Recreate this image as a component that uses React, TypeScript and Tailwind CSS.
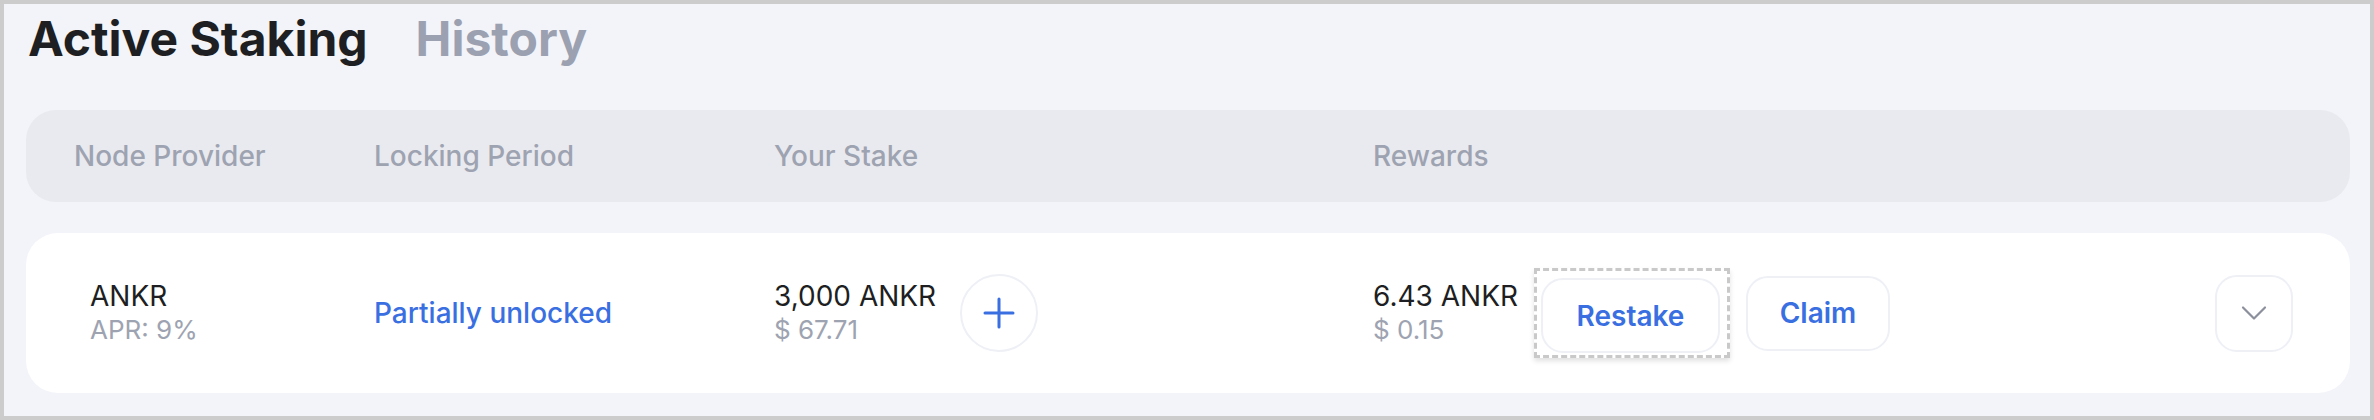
import { Plus, ChevronDown } from 'lucide-react'

const cols = 'grid grid-cols-[300px_400px_599px_1fr] items-center pl-[48px]'

export default function App() {
    return (
        <div className="w-[2374px] h-[420px] border-4 border-[#cccccc] bg-[#f3f4f9] font-['Inter',sans-serif] pl-[22px] pr-[20px]">
            <div className="flex items-center gap-[48px] pt-[6px] pl-[2px]">
                <h1 className="text-[48px] leading-[58px] font-bold text-[#1e1f23]">Active Staking</h1>
                <h1 className="text-[48px] leading-[58px] font-bold text-[#9ba1b0]">History</h1>
            </div>

            <div className={`${cols} mt-[42px] h-[92px] rounded-[30px] bg-[#e9eaef] text-[28px] font-medium text-[#9ea3b1]`}>
                <span>Node Provider</span>
                <span>Locking Period</span>
                <span>Your Stake</span>
                <span>Rewards</span>
            </div>

            <div className={`${cols} mt-[31px] h-[160px] rounded-[32px] bg-white text-[28px] leading-[34px]`}>
                <div className="pl-[16px]">
                    <p className="text-[#1e1f23]">ANKR</p>
                    <p className="text-[26px] text-[#9ea3b1]">APR: 9%</p>
                </div>
                <div className="text-[#3a6fe2] font-medium">Partially unlocked</div>
                <div className="flex items-center gap-[24px]">
                    <div>
                        <p className="text-[#1e1f23]">3,000 ANKR</p>
                        <p className="text-[26px] text-[#9ea3b1]">$ 67.71</p>
                    </div>
                    <button className="w-[78px] h-[78px] rounded-full border-2 border-[#eef0f6] bg-white flex items-center justify-center text-[#3a6fe2]">
                        <Plus size={48} strokeWidth={1.5} />
                    </button>
                </div>
                <div className="flex items-center">
                    <div className="w-[161px]">
                        <p className="text-[#1e1f23]">6.43 ANKR</p>
                        <p className="text-[26px] text-[#9ea3b1]">$ 0.15</p>
                    </div>
                    <div className="border-[3px] border-dashed border-[#c9c9c9] pt-[7px] pl-[4px] pr-[7px] pb-[2px] shadow-[0_3px_5px_rgba(0,0,0,0.12)]">
                        <button className="w-[179px] h-[75px] rounded-[22px] border-2 border-[#eef0f6] bg-white text-[#3a6fe2] font-semibold">
                            Restake
                        </button>
                    </div>
                    <button className="ml-[16px] w-[144px] h-[75px] rounded-[22px] border-2 border-[#eef0f6] bg-white text-[#3a6fe2] font-semibold">
                        Claim
                    </button>
                    <button className="ml-auto mr-[57px] w-[78px] h-[77px] rounded-[22px] border-2 border-[#eef0f6] bg-white flex items-center justify-center text-[#8c909c]">
                        <ChevronDown size={44} strokeWidth={1.2} />
                    </button>
                </div>
            </div>
        </div>
    )
}
